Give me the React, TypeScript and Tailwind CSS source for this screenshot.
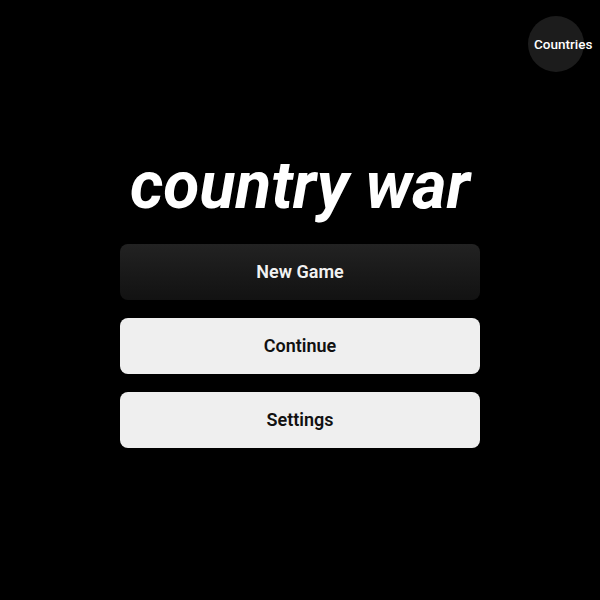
import React from 'react';

export default function App() {
  const font = { fontFamily: 'Roboto, "Noto Sans", sans-serif' };

  return (
    <div className="relative min-h-screen w-full bg-black flex flex-col items-center justify-center" style={font}>
      <button className="absolute top-4 right-4 w-14 h-14 rounded-full bg-[#1c1c1c] flex items-center justify-start pl-[6px] text-white text-[13.5px] font-medium">
        <span className="whitespace-nowrap">Countries</span>
      </button>

      <div className="flex flex-col items-center w-[360px] mt-[1px]">
        <h1 className="text-white text-[66px] leading-none font-bold italic mb-[25px] whitespace-nowrap">
          country war
        </h1>
        <div className="flex flex-col gap-[18px] w-full">
          <button className="h-14 w-full rounded-lg bg-gradient-to-b from-[#222222] to-[#121212] text-[#f2f2f2] text-lg font-semibold">
            New Game
          </button>
          <button className="h-14 w-full rounded-lg bg-[#efefef] text-[#111111] text-lg font-semibold">
            Continue
          </button>
          <button className="h-14 w-full rounded-lg bg-[#efefef] text-[#111111] text-lg font-semibold">
            Settings
          </button>
        </div>
      </div>
    </div>
  );
}
